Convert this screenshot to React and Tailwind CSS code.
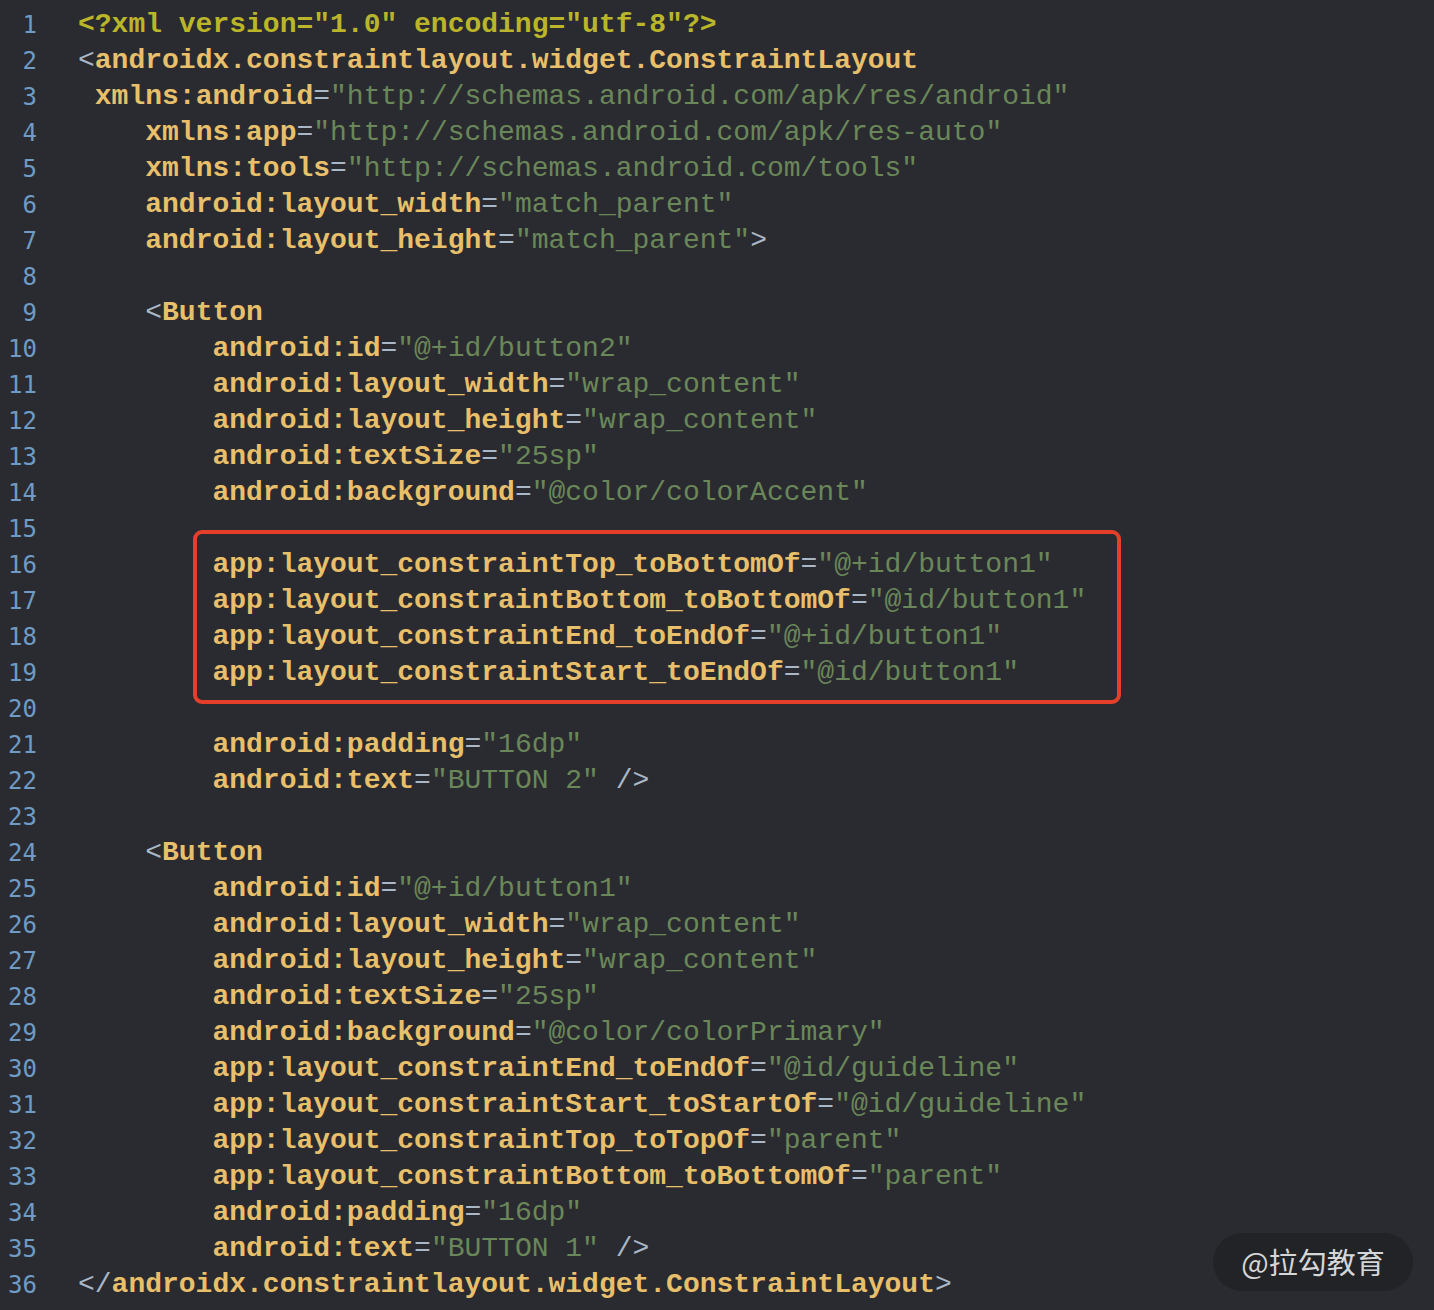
import React from "react";

const A = (name, value, indent = 8, tail = null) => {
  const parts = [["w", " ".repeat(indent)], ["t", name], ["g", "="], ["s", `"${value}"`]];
  if (tail) parts.push(["g", tail]);
  return parts;
};

const lines = [
  [["p", '<?xml version="1.0" encoding="utf-8"?>']],
  [["g", "<"], ["t", "androidx.constraintlayout.widget.ConstraintLayout"]],
  A("xmlns:android", "http://schemas.android.com/apk/res/android", 1),
  A("xmlns:app", "http://schemas.android.com/apk/res-auto", 4),
  A("xmlns:tools", "http://schemas.android.com/tools", 4),
  A("android:layout_width", "match_parent", 4),
  A("android:layout_height", "match_parent", 4, ">"),
  [],
  [["w", "    "], ["g", "<"], ["t", "Button"]],
  A("android:id", "@+id/button2"),
  A("android:layout_width", "wrap_content"),
  A("android:layout_height", "wrap_content"),
  A("android:textSize", "25sp"),
  A("android:background", "@color/colorAccent"),
  [],
  A("app:layout_constraintTop_toBottomOf", "@+id/button1"),
  A("app:layout_constraintBottom_toBottomOf", "@id/button1"),
  A("app:layout_constraintEnd_toEndOf", "@+id/button1"),
  A("app:layout_constraintStart_toEndOf", "@id/button1"),
  [],
  A("android:padding", "16dp"),
  A("android:text", "BUTTON 2", 8, " />"),
  [],
  [["w", "    "], ["g", "<"], ["t", "Button"]],
  A("android:id", "@+id/button1"),
  A("android:layout_width", "wrap_content"),
  A("android:layout_height", "wrap_content"),
  A("android:textSize", "25sp"),
  A("android:background", "@color/colorPrimary"),
  A("app:layout_constraintEnd_toEndOf", "@id/guideline"),
  A("app:layout_constraintStart_toStartOf", "@id/guideline"),
  A("app:layout_constraintTop_toTopOf", "parent"),
  A("app:layout_constraintBottom_toBottomOf", "parent"),
  A("android:padding", "16dp"),
  A("android:text", "BUTTON 1", 8, " />"),
  [["g", "</"], ["t", "androidx.constraintlayout.widget.ConstraintLayout"], ["g", ">"]],
];

function Tok({ type, text }) {
  if (type === "p") return <span className="text-[#bbb529] font-bold">{text}</span>;
  if (type === "g") return <span className="text-[#a9b7c6]">{text}</span>;
  if (type === "t") return <span className="text-[#e8bf6a] font-bold">{text}</span>;
  if (type === "s") return <span className="text-[#6a8759]">{text}</span>;
  return <span>{text}</span>;
}

function Line({ n, parts }) {
  return (
    <div className="flex h-[36px] items-center">
      <div className="w-[37px] shrink-0 text-right text-[24px] text-[#6f9bc4] font-['DejaVu_Sans_Mono',monospace] leading-[36px]">
        {n}
      </div>
      <div className="ml-[41px] whitespace-pre text-[28px] leading-[36px] font-['Courier_New','Liberation_Mono',monospace]">
        {parts.map((p, i) => (
          <Tok key={i} type={p[0]} text={p[1]} />
        ))}
      </div>
    </div>
  );
}

export default function App() {
  const before = lines.slice(0, 15);
  const boxed = lines.slice(15, 19);
  const after = lines.slice(19);
  return (
    <div className="relative h-[1310px] w-[1434px] overflow-hidden bg-[#2a2b30] pt-[7px]">
      {before.map((p, i) => (
        <Line key={i} n={i + 1} parts={p} />
      ))}
      <div className="relative">
        {boxed.map((p, i) => (
          <Line key={i} n={i + 16} parts={p} />
        ))}
        <div className="pointer-events-none absolute left-[193px] top-[-17px] h-[174px] w-[928px] rounded-[9px] border-[4px] border-[#e43f2b]" />
      </div>
      {after.map((p, i) => (
        <Line key={i} n={i + 20} parts={p} />
      ))}
      <div className="absolute left-[1213px] top-[1233px] flex h-[58px] w-[200px] items-center justify-center rounded-full bg-[#222327] text-[29px] text-[#d6d6d6] font-['Noto_Sans_CJK_SC',sans-serif]">
        @拉勾教育
      </div>
    </div>
  );
}
